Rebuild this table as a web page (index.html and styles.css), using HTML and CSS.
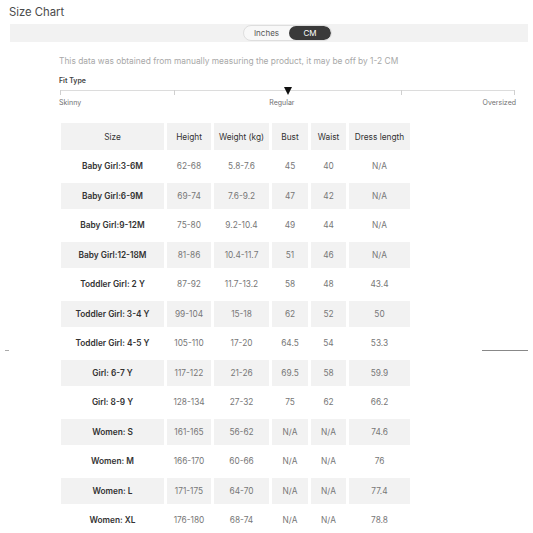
FILE: index.html
```html
<!DOCTYPE html>
<html>
<head>
<meta charset="utf-8">
<link rel="stylesheet" href="styles.css">
</head>
<body>
<div class="page">
  <h1 class="title">Size Chart</h1>
  <div class="unit-bar">
    <div class="toggle">
      <span class="seg">Inches</span>
      <span class="seg active">CM</span>
    </div>
  </div>
  <div class="content">
    <p class="note">This data was obtained from manually measuring the product, it may be off by 1-2 CM</p>
    <div class="fit-label">Fit Type</div>
    <div class="track">
      <span class="tick t0"></span>
      <span class="tick t25"></span>
      <span class="tick t75"></span>
      <span class="tick t100"></span>
      <span class="marker"></span>
    </div>
    <div class="fit-labels">
      <span>Skinny</span>
      <span class="mid">Regular</span>
      <span>Oversized</span>
    </div>
    <table class="chart">
      <colgroup>
        <col class="c-size"><col class="c-h"><col class="c-w"><col class="c-b"><col class="c-wa"><col class="c-d">
      </colgroup>
      <thead>
        <tr><th>Size</th><th>Height</th><th>Weight (kg)</th><th>Bust</th><th>Waist</th><th>Dress length</th></tr>
      </thead>
      <tbody>
        <tr><td>Baby Girl:3-6M</td><td>62-68</td><td>5.8-7.6</td><td>45</td><td>40</td><td>N/A</td></tr>
        <tr><td>Baby Girl:6-9M</td><td>69-74</td><td>7.6-9.2</td><td>47</td><td>42</td><td>N/A</td></tr>
        <tr><td>Baby Girl:9-12M</td><td>75-80</td><td>9.2-10.4</td><td>49</td><td>44</td><td>N/A</td></tr>
        <tr><td>Baby Girl:12-18M</td><td>81-86</td><td>10.4-11.7</td><td>51</td><td>46</td><td>N/A</td></tr>
        <tr><td>Toddler Girl: 2 Y</td><td>87-92</td><td>11.7-13.2</td><td>58</td><td>48</td><td>43.4</td></tr>
        <tr><td>Toddler Girl: 3-4 Y</td><td>99-104</td><td>15-18</td><td>62</td><td>52</td><td>50</td></tr>
        <tr><td>Toddler Girl: 4-5 Y</td><td>105-110</td><td>17-20</td><td>64.5</td><td>54</td><td>53.3</td></tr>
        <tr><td>Girl: 6-7 Y</td><td>117-122</td><td>21-26</td><td>69.5</td><td>58</td><td>59.9</td></tr>
        <tr><td>Girl: 8-9 Y</td><td>128-134</td><td>27-32</td><td>75</td><td>62</td><td>66.2</td></tr>
        <tr><td>Women: S</td><td>161-165</td><td>56-62</td><td>N/A</td><td>N/A</td><td>74.6</td></tr>
        <tr><td>Women: M</td><td>166-170</td><td>60-66</td><td>N/A</td><td>N/A</td><td>76</td></tr>
        <tr><td>Women: L</td><td>171-175</td><td>64-70</td><td>N/A</td><td>N/A</td><td>77.4</td></tr>
        <tr><td>Women: XL</td><td>176-180</td><td>68-74</td><td>N/A</td><td>N/A</td><td>78.8</td></tr>
      </tbody>
    </table>
  </div>
  <span class="stray stray-left"></span>
  <span class="stray stray-right"></span>
</div>
</body>
</html>
```
FILE: styles.css
```css
html, body {
  margin: 0;
  padding: 0;
  background: #ffffff;
}
body {
  font-family: Inter, "Liberation Sans", sans-serif;
  color: #333;
}
.page {
  position: relative;
  width: 533px;
  height: 533px;
  overflow: hidden;
}
.title {
  margin: 0;
  padding: 4px 0 4px 9px;
  height: 16px;
  font-size: 11.3px;
  line-height: 16px;
  font-weight: 400;
  color: #4a4a4a;
}
.unit-bar {
  margin: 0 5px 0 10px;
  height: 18px;
  background: #f2f2f2;
  display: flex;
  align-items: center;
  padding-left: 233px;
}
.toggle {
  display: flex;
  height: 16px;
  border-radius: 8px;
  border: 1px solid #dedede;
  background: #f8f8f8;
  box-sizing: border-box;
  overflow: hidden;
}
.seg {
  display: flex;
  align-items: center;
  justify-content: center;
  font-size: 8px;
  color: #555;
  width: 45px;
}
.seg.active {
  width: 42px;
  background: #3a3a3a;
  color: #fff;
  border-radius: 8px;
}
.content {
  padding-left: 59px;
  width: 457px;
}
.note {
  margin: 13px 0 0;
  font-size: 8.4px;
  line-height: 12px;
  color: #a8a8a8;
}
.fit-label {
  margin-top: 9px;
  font-size: 7px;
  line-height: 10px;
  font-weight: 600;
  color: #444;
}
.track {
  position: relative;
  margin-top: 4px;
  margin-left: 1px;
  width: 455px;
  height: 1px;
  background: #dcdcdc;
}
.tick {
  position: absolute;
  top: 0;
  width: 1px;
  height: 5px;
  background: #d0d0d0;
}
.t0 { left: 0; }
.t25 { left: 25%; }
.t75 { left: 75%; }
.t100 { right: 0; }
.marker {
  position: absolute;
  left: 50%;
  top: -3px;
  margin-left: -4px;
  width: 0;
  height: 0;
  border-left: 4px solid transparent;
  border-right: 4px solid transparent;
  border-top: 8px solid #111;
}
.fit-labels {
  margin-top: 7px;
  display: flex;
  justify-content: space-between;
  font-size: 7px;
  line-height: 10px;
  color: #707070;
}
.chart {
  margin-top: 12px;
  margin-left: -1px;
  border-collapse: separate;
  border-spacing: 3px 3px;
  table-layout: fixed;
  width: 355px;
  font-size: 8.3px;
}
.c-size { width: 103px; }
.c-h { width: 44px; }
.c-w { width: 55px; }
.c-b { width: 36px; }
.c-wa { width: 35px; }
.c-d { width: 61px; }
.chart th {
  height: 27px;
  padding: 0;
  background: #f2f2f2;
  font-weight: 400;
  color: #333;
  text-align: center;
}
.chart td {
  height: 26.5px;
  padding: 0;
  text-align: center;
  color: #777;
  white-space: nowrap;
}
.chart td:first-child {
  font-weight: 600;
  color: #333;
}
.chart tbody tr:nth-child(even) td {
  background: #f2f2f2;
}
.stray {
  position: absolute;
  top: 350px;
  height: 1px;
}
.stray-left {
  left: 5px;
  width: 4px;
  background: #aaa;
}
.stray-right {
  left: 482px;
  width: 46px;
  background: #888;
}
```
